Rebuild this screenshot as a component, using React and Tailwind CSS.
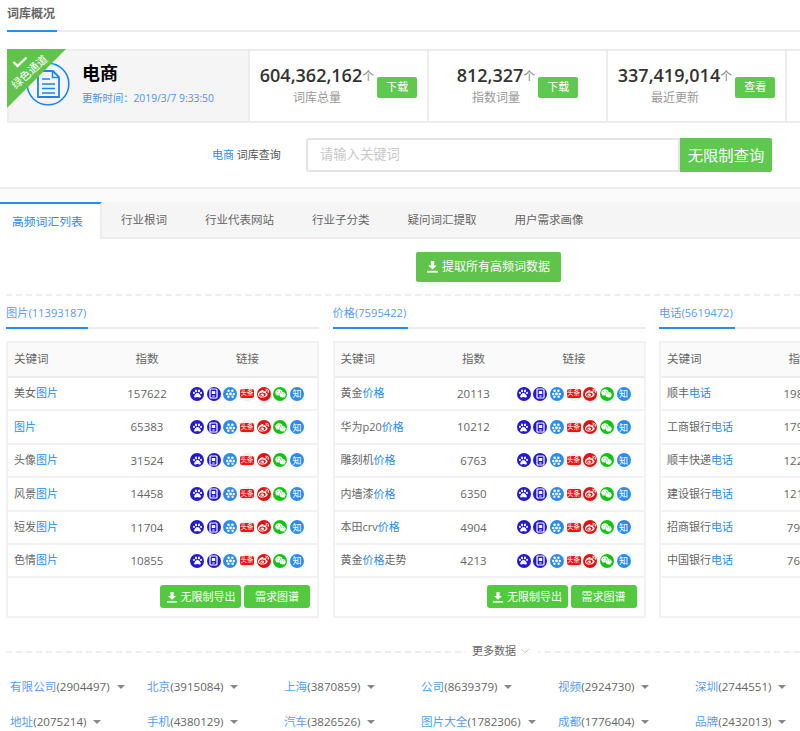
import React from "react";
import { FaPaw, FaWeibo, FaWeixin } from "react-icons/fa";
import { ChevronDown } from "lucide-react";

const FONT = "font-['Open_Sans','Noto_Sans_CJK_SC',sans-serif]";

function DownIcon({ size = 13 }) {
  return (
    <svg width={size} height={size} viewBox="0 0 13 13" fill="#fff" className="shrink-0">
      <path d="M4.800 1h3.400v4.500h2.600L6.500 9.500 2.200 5.500h2.600z" />
      <rect x="1" y="10.800" width="11" height="1.800" />
    </svg>
  );
}

function Circle({ bg, children }) {
  return (
    <span className={`flex h-[14px] w-[14px] items-center justify-center rounded-full text-white ${bg}`}>{children}</span>
  );
}

function LinkIcons() {
  return (
    <div className="flex items-center gap-[2.7px]">
      <Circle bg="bg-[#2319d0]"><FaPaw size={9} /></Circle>
      <Circle bg="bg-[#2319d0]">
        <svg width="11" height="11" viewBox="0 0 11 11">
          <rect x="2" y="1" width="7" height="9" rx="1" fill="none" stroke="#fff" strokeWidth="1.200" />
          <rect x="3.800" y="3" width="3.400" height="3" fill="#fff" />
          <path d="M4.300 8h2.400" stroke="#fff" strokeWidth="1" />
        </svg>
      </Circle>
      <Circle bg="bg-[#2a8cf0]">
        <svg width="11" height="11" viewBox="0 0 11 11" fill="#fff">
          <circle cx="3.600" cy="2.800" r="1.300" />
          <circle cx="7.400" cy="2.800" r="1.300" />
          <circle cx="2.200" cy="6" r="1.200" />
          <circle cx="8.800" cy="6" r="1.200" />
          <rect x="4.200" y="4.400" width="2.600" height="2.800" rx="0.800" />
          <circle cx="3.400" cy="8.800" r="1.200" />
          <circle cx="7.600" cy="8.800" r="1.200" />
        </svg>
      </Circle>
      <span className="flex h-[14px] w-[14px] items-center justify-center rounded-full bg-[#eeeeee]">
        <span className="flex h-[9px] w-[14px] items-center justify-center rounded-[2px] bg-[#f01414] text-[6.500px] leading-none text-white">头条</span>
      </span>
      <Circle bg="bg-[#e60f0f]"><FaWeibo size={11} /></Circle>
      <Circle bg="bg-[#0fc40f]"><FaWeixin size={11} /></Circle>
      <Circle bg="bg-[#2a8cf0]"><span className="text-[9px] leading-none">知</span></Circle>
    </div>
  );
}

function Keyword({ text, hit }) {
  const i = text.indexOf(hit);
  return (
    <span>
      {text.slice(0, i)}
      <span className="text-[#2a8cf0]">{hit}</span>
      {text.slice(i + hit.length)}
    </span>
  );
}

function WordTable({ title, count, hit, rows }) {
  return (
    <div className="w-[313px] shrink-0">
      <div className="h-[33px] border-b-2 border-[#ececec]">
        <div className="inline-block h-[33px] border-b-2 border-[#2a8cf0] pr-[2px] pt-[8px] text-[11.200px] leading-[18px] text-[#5b9df0]">
          {title}({count})
        </div>
      </div>
      <div className="mt-[12px] h-[277px] border-2 border-[#f2f2f2]">
        <div className="grid h-[35px] grid-cols-[100px_78px_1fr] items-center border-b-2 border-[#ececec] bg-[#fafafa] pb-[1px] text-[11.500px] text-[#666]">
          <span className="pl-[6px]">关键词</span>
          <span className="text-center">指数</span>
          <span className="pl-[50px]">链接</span>
        </div>
        {rows.map(([k, n]) => (
          <div key={k} className="grid h-[33.400px] grid-cols-[100px_78px_1fr] items-center border-b-2 border-[#f2f2f2] text-[11px] text-[#666]">
            <span className="whitespace-nowrap pl-[6px]"><Keyword text={k} hit={hit} /></span>
            <span className="text-center text-[11.500px]">{n}</span>
            <span className="pl-[4px]"><LinkIcons /></span>
          </div>
        ))}
        <div className="flex justify-end gap-[3px] pr-[7px] pt-[7px]">
          <button className="flex h-[23px] w-[81px] items-center justify-center gap-[3px] rounded-[3px] bg-[#52c93f] text-[11px] text-white">
            <DownIcon size={12} />无限制导出
          </button>
          <button className="h-[23px] w-[66px] rounded-[3px] bg-[#52c93f] text-[11px] text-white">需求图谱</button>
        </div>
      </div>
    </div>
  );
}

function Stat({ num, label, btn }) {
  return (
    <div className="flex w-[179px] shrink-0 items-center justify-center border-r-2 border-[#ececec] first:w-[177px]">
      <div className="flex flex-col items-center pb-[2px]">
        <div className="flex items-end whitespace-nowrap">
          <span className="text-[18px] font-semibold leading-[24px] text-[#333]">{num}</span>
          <span className="text-[12px] leading-[20px] text-[#888]">个</span>
        </div>
        <span className="mt-[1px] text-[12px] leading-[20px] text-[#999]">{label}</span>
      </div>
      <button className="ml-[3px] mt-[3px] h-[21px] w-[40px] rounded-[2px] bg-[#5fc94f] text-[11px] text-white">{btn}</button>
    </div>
  );
}

const T1 = [["美女图片", 157622], ["图片", 65383], ["头像图片", 31524], ["风景图片", 14458], ["短发图片", 11704], ["色情图片", 10855]];
const T2 = [["黄金价格", 20113], ["华为p20价格", 10212], ["雕刻机价格", 6763], ["内墙漆价格", 6350], ["本田crv价格", 4904], ["黄金价格走势", 4213]];
const T3 = [["顺丰电话", 19832], ["工商银行电话", 17921], ["顺丰快递电话", 12246], ["建设银行电话", 12105], ["招商银行电话", 7905], ["中国银行电话", 7613]];
const MORE = [
  ["有限公司", 2904497], ["北京", 3915084], ["上海", 3870859], ["公司", 8639379], ["视频", 2924730], ["深圳", 2744551],
  ["地址", 2075214], ["手机", 4380129], ["汽车", 3826526], ["图片大全", 1782306], ["成都", 1776404], ["品牌", 2432013],
];
const TABS = ["行业根词", "行业代表网站", "行业子分类", "疑问词汇提取", "用户需求画像"];

export default function App() {
  return (
    <div className={`h-[731px] w-[800px] overflow-hidden bg-white ${FONT}`}>
      <div className="ml-[7px] h-[32px] border-b-2 border-[#ececec]">
        <div className="inline-block h-[32px] w-[50px] border-b-2 border-[#2a8cf0] pt-[5px] text-[12px] font-bold leading-[18px] text-[#666]">词库概况</div>
      </div>

      <div className="ml-[7px] mt-[17px] flex h-[74px] w-[900px] border-2 border-[#ececec]">
        <div className="relative flex w-[241px] shrink-0 items-center border-r-2 border-[#ececec] bg-[#f5f5f5] pb-[4px] pl-[17px]">
          <svg width="44" height="44" viewBox="0 0 44 44" className="shrink-0">
            <circle cx="22" cy="22" r="20.800" fill="none" stroke="#1a84f0" strokeWidth="1.600" />
            <path d="M12 9h15l6 6v20H12z" fill="none" stroke="#1a84f0" strokeWidth="1.800" />
            <path d="M26.500 9v6.500H33" fill="none" stroke="#1a84f0" strokeWidth="1.500" />
            <path d="M16 17h8M16 22h13M16 26.500h13M16 31h13" stroke="#1a84f0" strokeWidth="1.600" />
          </svg>
          <div className="ml-[12px]">
            <div className="-mt-[2px] text-[18px] font-bold leading-[24px] text-black">电商</div>
            <div className="mt-[5px] whitespace-nowrap text-[10.300px] leading-[16px] text-[#4d94f0]">更新时间：2019/3/7 9:33:50</div>
          </div>
          <div className="absolute -left-[2px] -top-[2px] h-[59px] w-[59px] bg-[#5fc34c] [clip-path:polygon(0_0,100%_0,0_100%)]" />
          <svg width="16" height="12" viewBox="0 0 16 12" className="absolute left-[3px] top-[5px]">
            <path d="M1.500 6l4 4 9-8.500" fill="none" stroke="#fff" strokeWidth="2.400" />
          </svg>
          <span className="absolute -left-[2px] top-[15px] -rotate-[42deg] whitespace-nowrap text-[11px] leading-none text-white">绿色通道</span>
        </div>
        <Stat num="604,362,162" label="词库总量" btn="下载" />
        <Stat num="812,327" label="指数词量" btn="下载" />
        <Stat num="337,419,014" label="最近更新" btn="查看" />
      </div>

      <div className="flex h-[66px] items-center border-b-2 border-[#ececec] pl-[212px]">
        <span className="w-[94px] text-[11px] text-[#555]"><span className="text-[#2a8cf0]">电商</span> 词库查询</span>
        <div className="flex h-[34px] w-[466px]">
          <div className="flex flex-1 items-center rounded-l-[3px] border-2 border-[#e4e4e4] pl-[12px] text-[13.300px] text-[#c8c8c8]">请输入关键词</div>
          <button className="w-[92px] rounded-r-[2px] bg-[#5fc94f] text-[15.300px] text-white">无限制查询</button>
        </div>
      </div>

      <div className="bg-[#fbfbfb] pt-[13px]">
        <div className="flex h-[37px] border-b-2 border-[#ececec] bg-[#f5f5f5] text-[11.500px] text-[#666]">
          <div className="-mb-[2px] flex h-[37px] w-[102px] items-center border-r-2 border-t-2 border-r-[#ececec] border-t-[#2a8cf0] bg-white pl-[12px] text-[11.800px] text-[#2a8cf0]">高频词汇列表</div>
          <div className="flex pl-[19px] pt-[1px]">
            {TABS.map((t) => (
              <span key={t} className="mr-[38px] flex items-center whitespace-nowrap">{t}</span>
            ))}
          </div>
        </div>
      </div>

      <div className="ml-[6px] flex h-[57px] items-center justify-center border-b-2 border-dashed border-[#eeeeee] pl-[170px]">
        <button className="flex h-[30px] w-[145px] items-center justify-center gap-[3px] rounded-[2px] bg-[#5fc34c] text-[12px] text-white">
          <DownIcon />提取所有高频词数据
        </button>
      </div>

      <div className="ml-[6px] flex gap-[13.500px]">
        <WordTable title="图片" count="11393187" hit="图片" rows={T1} />
        <WordTable title="价格" count="7595422" hit="价格" rows={T2} />
        <WordTable title="电话" count="5619472" hit="电话" rows={T3} />
      </div>

      <div className="relative ml-[6px] mt-[33px] border-b-2 border-dashed border-[#eeeeee]">
        <div className="absolute left-[460px] top-[-9px] flex items-center gap-[2px] bg-white px-[6px] text-[11px] leading-[18px] text-[#666]">
          更多数据<ChevronDown size={14} strokeWidth={1} className="text-[#999]" />
        </div>
      </div>

      <div className="ml-[10px] mt-[25px] grid w-[830px] grid-cols-[repeat(6,137px)] gap-y-[17px]">
        {MORE.map(([k, n]) => (
          <div key={k} className="flex h-[18px] items-center whitespace-nowrap text-[11.600px] leading-[18px] text-[#666]">
            <span className="text-[#5b9df0]">{k}</span>({n})
            <span className="ml-[7px] h-0 w-0 border-x-[4px] border-t-[4px] border-x-transparent border-t-[#888]" />
          </div>
        ))}
      </div>
    </div>
  );
}
